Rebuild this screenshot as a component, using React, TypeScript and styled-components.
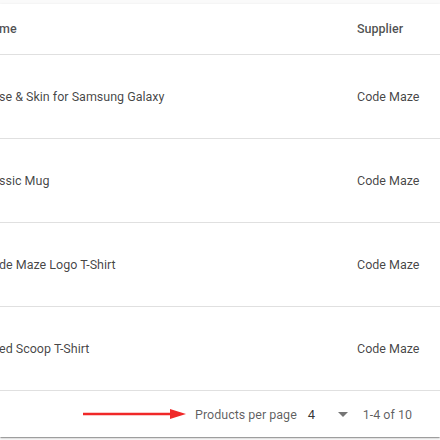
import React from "react";
import styled, { createGlobalStyle } from "styled-components";

const Global = createGlobalStyle`
  html, body { margin: 0; padding: 0; background: #ffffff; }
  body { font-family: Roboto, "Liberation Sans", Arial, sans-serif; width: 440px; height: 440px; overflow: hidden; }
`;

const Page = styled.div`
  background: #fafafa;
  padding-top: 4px;
  height: 440px;
  box-sizing: border-box;
`;

const Card = styled.div`
  background: #ffffff;
  box-shadow: 0 2px 1px -1px rgba(0,0,0,0.2), 0 1px 1px 0 rgba(0,0,0,0.14), 0 1px 3px 0 rgba(0,0,0,0.12);
`;

const Row = styled.div<{ $height: number; $lift: number }>`
  display: grid;
  grid-template-columns: 1fr 82px;
  align-items: center;
  box-sizing: border-box;
  height: ${(p) => p.$height + 1}px;
  padding-bottom: ${(p) => p.$lift}px;
  border-bottom: 1px solid #e0e0e0;
`;

const HeadCell = styled.div`
  font-size: 12.5px;
  font-weight: 500;
  color: rgba(0, 0, 0, 0.7);
  white-space: nowrap;
  overflow: hidden;
  margin-left: -1px;
`;

const Cell = styled.div`
  font-size: 12.5px;
  color: rgba(0, 0, 0, 0.74);
  white-space: nowrap;
  overflow: hidden;
  margin-left: -1px;
`;

const Footer = styled.div`
  display: flex;
  align-items: center;
  justify-content: flex-end;
  height: 46px;
  padding-right: 28px;
  font-size: 12.5px;
  color: rgba(0, 0, 0, 0.64);
`;

const Arrow = styled.svg`
  display: block;
  margin-right: 9px;
`;

const Label = styled.span`
  white-space: nowrap;
`;

const Select = styled.div`
  display: flex;
  align-items: center;
  justify-content: space-between;
  width: 40px;
  margin-left: 11px;
  margin-right: 15px;
  font-size: 13px;
  color: rgba(0, 0, 0, 0.8);
`;

const Caret = styled.span`
  width: 0;
  height: 0;
  border-left: 5px solid transparent;
  border-right: 5px solid transparent;
  border-top: 5px solid rgba(0, 0, 0, 0.54);
`;

const rows = [
  ["se & Skin for Samsung Galaxy", "Code Maze"],
  ["ssic Mug", "Code Maze"],
  ["de Maze Logo T-Shirt", "Code Maze"],
  ["ed Scoop T-Shirt", "Code Maze"],
];

export default function App() {
  return (
    <>
      <Global />
      <Page>
        <Card>
          <Row $height={50} $lift={2}>
            <HeadCell>me</HeadCell>
            <HeadCell>Supplier</HeadCell>
          </Row>
          {rows.map(([name, supplier], i) => (
            <Row key={i} $height={83} $lift={1}>
              <Cell>{name}</Cell>
              <Cell>{supplier}</Cell>
            </Row>
          ))}
          <Footer>
            <Arrow width="103" height="12" viewBox="0 0 103 12">
              <line x1="0" y1="6" x2="89" y2="6" stroke="#f02828" strokeWidth="2.5" />
              <polygon points="87,1 103,6 87,11" fill="#f02828" />
            </Arrow>
            <Label>Products per page</Label>
            <Select>
              <span>4</span>
              <Caret />
            </Select>
            <Label>1-4 of 10</Label>
          </Footer>
        </Card>
      </Page>
    </>
  );
}
